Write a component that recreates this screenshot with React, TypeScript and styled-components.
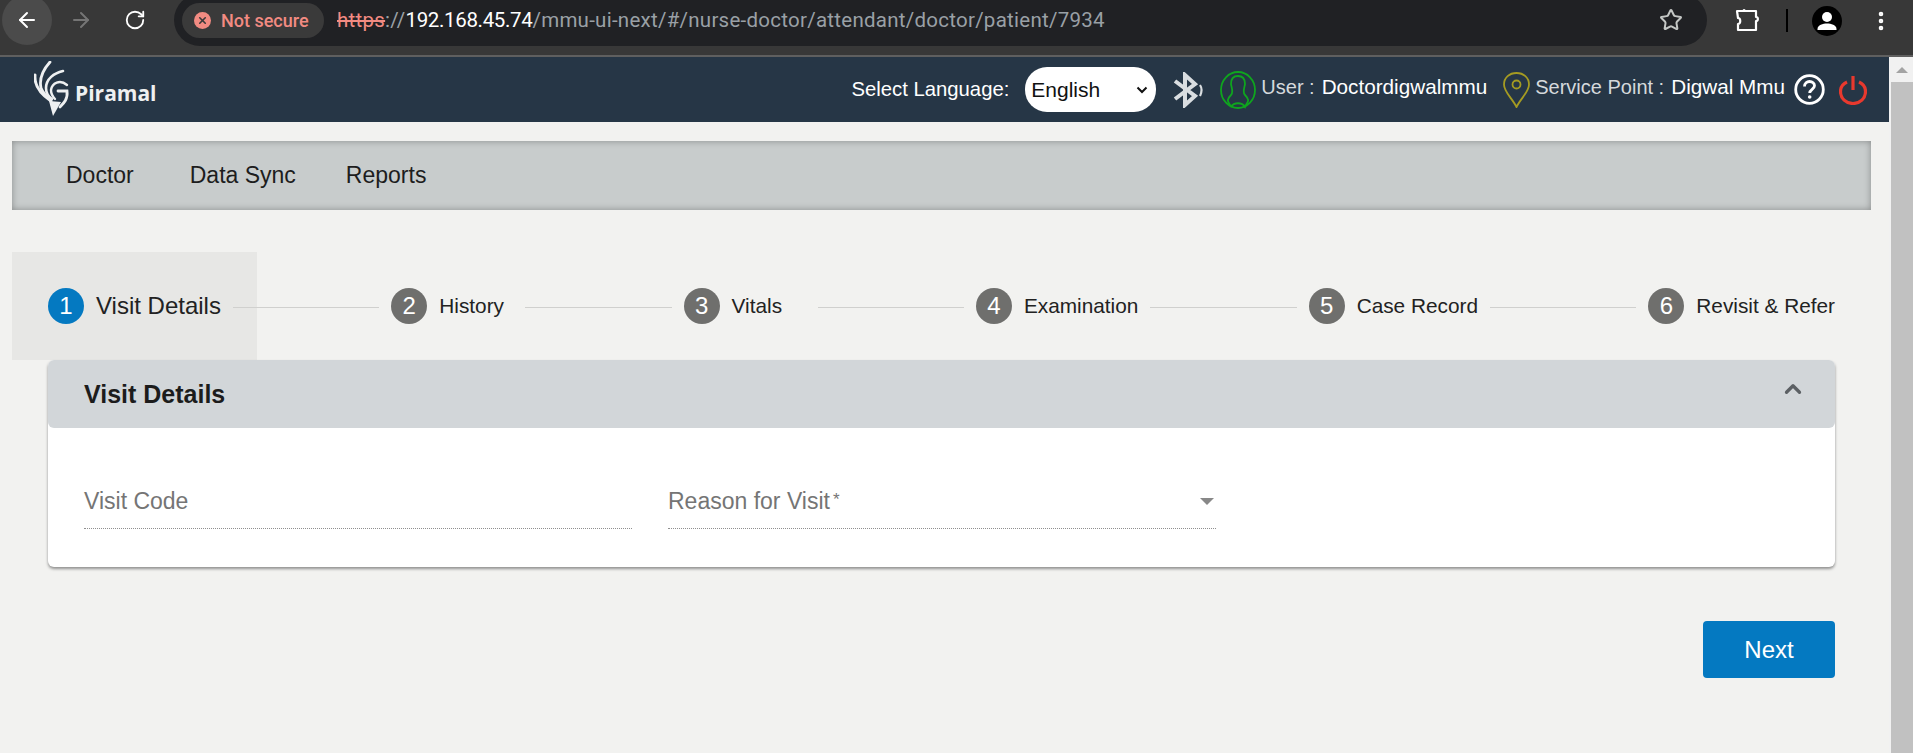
import React from "react";
import styled, { createGlobalStyle } from "styled-components";
import { ArrowLeft, ArrowRight, RotateCw, Star, EllipsisVertical, X, ChevronUp } from "lucide-react";

const Global = createGlobalStyle`
  html, body { margin: 0; padding: 0; height: 100%; overflow: hidden; background: #f2f2f0; }
  * { box-sizing: border-box; }
  body { font-family: "Liberation Sans", Arial, sans-serif; }
`;

const Page = styled.div`
  width: 1913px;
  height: 753px;
  display: flex;
  flex-direction: column;
  overflow: hidden;
`;

const Chrome = styled.div`
  height: 57px;
  flex: none;
  background: #383838;
  border-bottom: 2px solid #5f5f5f;
  display: flex;
  align-items: flex-start;
`;

const NavCluster = styled.div`
  display: flex;
  width: 174px;
  padding-left: 2px;
  flex: none;
`;

const ChromeBtn = styled.div<{ $active?: boolean; $width: number }>`
  width: ${(p) => p.$width}px;
  height: 50px;
  margin-top: -5px;
  border-radius: 25px;
  background: ${(p) => (p.$active ? "#4b4b4b" : "transparent")};
  display: flex;
  align-items: center;
  justify-content: center;
  color: #fff;
  flex: none;
`;

const AddressBar = styled.div`
  width: 1533px;
  height: 52px;
  margin-top: -6px;
  flex: none;
  background: #202124;
  border-radius: 26px;
  display: flex;
  align-items: center;
  padding: 0 24px 0 8px;
`;

const SecurityPill = styled.div`
  width: 142px;
  height: 35px;
  margin-top: 1px;
  border-radius: 18px;
  background: #3a3a3a;
  color: #f28b82;
  display: flex;
  align-items: center;
  gap: 10px;
  padding-left: 12px;
  font: 500 18px "Roboto", sans-serif;
  flex: none;
`;

const ErrorDot = styled.span`
  width: 17px;
  height: 17px;
  border-radius: 50%;
  background: #f28b82;
  color: #3a3a3a;
  display: flex;
  align-items: center;
  justify-content: center;
`;

const Url = styled.div`
  margin-left: 13px;
  font: 400 20.5px/1 "Roboto", sans-serif;
  letter-spacing: 0.26px;
  color: #9aa0a6;
  flex: 1;
  white-space: nowrap;
`;

const Strike = styled.span`
  color: #f28b82;
  text-decoration: line-through;
`;

const Host = styled.span`
  color: #fff;
  letter-spacing: -0.35px;
`;

const StarSlot = styled.div`
  display: flex;
  color: #c4c7c5;
`;

const ChromeRight = styled.div`
  display: flex;
  align-items: center;
  height: 41px;
  flex: 1;
  color: #fff;
`;

const PuzzleSlot = styled.div`
  margin-left: 28px;
  display: flex;
`;

const Divider = styled.div`
  width: 2px;
  height: 23px;
  background: #000;
  margin-left: 26px;
`;

const Avatar = styled.div`
  width: 30px;
  height: 30px;
  border-radius: 50%;
  background: #000;
  margin-left: 24px;
  overflow: hidden;
  flex: none;
`;

const DotsSlot = styled.div`
  margin-left: 27px;
  display: flex;
`;

const Body = styled.div`
  flex: 1;
  display: flex;
  min-height: 0;
`;

const Main = styled.div`
  width: 1889px;
  flex: none;
  background: #f2f2f0;
  display: flex;
  flex-direction: column;
`;

const ScrollTrack = styled.div`
  width: 24px;
  flex: none;
  background: #f1f1f1;
  display: flex;
  flex-direction: column;
  align-items: stretch;
  padding-left: 2px;
`;

const ScrollArrow = styled.div`
  height: 25px;
  display: flex;
  align-items: center;
  justify-content: center;
  &::before {
    content: "";
    border-left: 6px solid transparent;
    border-right: 6px solid transparent;
    border-bottom: 6px solid #a3a3a3;
  }
`;

const ScrollThumb = styled.div`
  flex: 1;
  background: #c1c1c1;
`;

const Header = styled.header`
  height: 65px;
  flex: none;
  background: #263646;
  display: flex;
  align-items: center;
  padding: 0 22px 0 34px;
  color: #fff;
`;

const Logo = styled.div`
  display: flex;
  align-items: flex-end;
  margin-bottom: 1px;
`;

const LogoText = styled.span`
  font: 700 21px/1 "Open Sans", sans-serif;
  color: #eef0f1;
  margin-left: 5px;
  margin-bottom: 13px;
`;

const HeaderRight = styled.div`
  margin-left: auto;
  display: flex;
  align-items: center;
`;

const LangLabel = styled.span`
  font: 400 20.3px "Liberation Sans", sans-serif;
  margin-right: 16px;
`;

const LangSelect = styled.select`
  appearance: none;
  width: 131px;
  height: 45px;
  border-radius: 22px;
  border: none;
  color: #111;
  font: 400 21px "Liberation Sans", sans-serif;
  padding: 0 24px 0 6px;
  margin-right: 16px;
  background: #fff url("data:image/svg+xml,%3Csvg xmlns='http://www.w3.org/2000/svg' width='12' height='8' viewBox='0 0 12 8'%3E%3Cpath d='M1.5 1.5 L6 6 L10.5 1.5' fill='none' stroke='%23111' stroke-width='2'/%3E%3C/svg%3E") no-repeat right 8px center;
`;

const UserText = styled.span<{ $gap: number }>`
  font: 400 20px "Liberation Sans", sans-serif;
  color: #d5d9dc;
  margin: -6px ${(p) => p.$gap}px 0 5px;
  white-space: nowrap;
`;

const UserValue = styled.b`
  font-weight: 400;
  font-size: 20.7px;
  color: #fff;
  margin-left: 7px;
`;

const IconSlot = styled.div<{ $ml?: number }>`
  display: flex;
  margin-left: ${(p) => p.$ml ?? 0}px;
`;

const TopNav = styled.nav`
  margin: 19px 18px 0 12px;
  height: 69px;
  flex: none;
  background: #c8cccc;
  box-shadow: inset 0 0 7px rgba(0, 0, 0, 0.32);
  display: flex;
  align-items: center;
  padding-left: 54px;
  gap: 50px;
`;

const TopNavItem = styled.a`
  font: 400 23px "Liberation Sans", sans-serif;
  color: #1d1d1d;
  &:first-child {
    margin-right: 6px;
  }
`;

const Stepper = styled.div`
  margin: 42px 18px 0 12px;
  height: 108px;
  flex: none;
  display: flex;
  align-items: stretch;
`;

const Step = styled.div<{ $selected?: boolean }>`
  display: flex;
  align-items: center;
  padding: 0 36px;
  gap: 12px;
  flex: none;
  background: ${(p) => (p.$selected ? "#e7e7e5" : "transparent")};
`;

const StepNum = styled.span<{ $selected?: boolean }>`
  width: 36px;
  height: 36px;
  border-radius: 50%;
  background: ${(p) => (p.$selected ? "#0479c1" : "#6f6f6d")};
  color: #fff;
  display: flex;
  align-items: center;
  justify-content: center;
  font: 400 24px "Liberation Sans", sans-serif;
`;

const StepLabel = styled.span<{ $selected?: boolean }>`
  font: 400 ${(p) => (p.$selected ? "24px" : "20.8px")} "Liberation Sans", sans-serif;
  color: #222;
  white-space: nowrap;
  min-width: 74px;
`;

const StepLine = styled.div`
  flex: 1;
  min-width: 0;
  height: 1px;
  background: #d0d0ce;
  align-self: center;
  margin: 3px -24px 0;
  position: relative;
`;

const Card = styled.section`
  margin: 0 54px 0 48px;
  height: 207px;
  flex: none;
  background: #fff;
  border-radius: 6px;
  box-shadow: 0 2px 3px rgba(0, 0, 0, 0.4);
`;

const CardHeader = styled.div`
  height: 68px;
  background: #d2d6d9;
  border-radius: 6px;
  display: flex;
  align-items: center;
  justify-content: space-between;
  padding: 0 29px 0 36px;
  color: #5c6064;
  svg {
    margin-bottom: 11px;
  }
`;

const CardTitle = styled.h2`
  margin: 0;
  font: 700 25px "Liberation Sans", sans-serif;
  color: #1c1c1c;
`;

const Fields = styled.div`
  display: flex;
  gap: 36px;
  padding: 35px 36px 0;
`;

const Field = styled.div`
  width: 548px;
  height: 66px;
  border-bottom: 1px dotted #8f8f8f;
  display: flex;
  align-items: center;
  justify-content: space-between;
  font: 400 23px "Liberation Sans", sans-serif;
  color: #757575;
  padding-top: 12px;
`;

const Req = styled.span`
  font-size: 17px;
  vertical-align: 4px;
  margin-left: 3px;
`;

const Caret = styled.span`
  width: 0;
  height: 0;
  margin-right: 2px;
  border-left: 7px solid transparent;
  border-right: 7px solid transparent;
  border-top: 7px solid #888;
`;

const Actions = styled.div`
  margin: 54px 54px 0 0;
  display: flex;
  justify-content: flex-end;
`;

const NextButton = styled.button`
  width: 132px;
  height: 57px;
  border: none;
  border-radius: 4px;
  background: #0479c1;
  color: #fff;
  font: 400 24px "Liberation Sans", sans-serif;
`;

const PiramalMark = () => (
  <svg width="36" height="56" viewBox="0 0 36 56" fill="none">
    <g stroke="#eef0f1" strokeLinecap="round" fill="none">
      <path d="M1 14 C0 26 8 34 17 40" strokeWidth="3" />
      <path d="M16 1 C8 10 5 18 7 27 C9 32 12 35 16 38" strokeWidth="2.8" />
      <path d="M29 10 C20 12 12 18 12 27 C12 32 15 36 18 38" strokeWidth="2.6" />
      <path d="M33 24 C26 18 18 22 17 29 C17 33 19 36 21 38" strokeWidth="2.4" />
      <path d="M24 30 L33 30 C34 38 30 42 26 46" strokeWidth="2.8" />
    </g>
    <path d="M15 40 L27 41 L19 55 Z" fill="#eef0f1" />
  </svg>
);

const BluetoothIcon = () => (
  <svg width="31" height="36" viewBox="0 0 31 36" fill="none" stroke="#d9dde0">
    <path d="M3 9 L23 24 L13 33 V3 L23 12 L3 27" strokeWidth="4" />
    <path d="M28 13 C30 16 30 20 28 24" strokeWidth="2.2" />
  </svg>
);

const UserIcon = () => (
  <svg width="36" height="38" viewBox="0 0 36 38" fill="none" stroke="#0fa51e" strokeWidth="1.8">
    <ellipse cx="18" cy="19" rx="17" ry="18" />
    <path d="M11 36 C9 31 5 30 11 24 C14 21 11 15 11 13 C11 7 14 5 18 5 C22 5 25 7 25 13 C25 15 22 21 25 24 C31 30 27 31 25 36 C22 31 14 31 11 36" />
  </svg>
);

const PinIcon = () => (
  <svg width="27" height="36" viewBox="0 0 27 36" fill="none" stroke="#a59b22" strokeWidth="1.8">
    <path d="M13.5 35 C9 26 1 20 1 12.5 C1 5.5 6.5 1 13.5 1 C20.5 1 26 5.5 26 12.5 C26 20 18 26 13.5 35 Z" />
    <circle cx="13.5" cy="12.5" r="4" />
  </svg>
);

const HelpIcon = () => (
  <svg width="31" height="31" viewBox="0 0 31 31" fill="none" stroke="#fff">
    <circle cx="15.5" cy="15.5" r="13.8" strokeWidth="2.8" />
    <path d="M10.5 12.5 C10.5 9 13 7.5 15.5 7.5 C18.5 7.5 20.5 9.3 20.5 11.8 C20.5 15.2 15.7 15.5 15.7 19" strokeWidth="2.8" />
    <circle cx="15.7" cy="23" r="1.8" fill="#fff" stroke="none" />
  </svg>
);

const PowerIcon = () => (
  <svg width="28" height="30" viewBox="0 0 28 30" fill="none" stroke="#e8392e" strokeWidth="3.2">
    <path d="M8 7 C3.5 9 1.5 12.5 1.5 16.5 C1.5 23.5 7 28.5 14 28.5 C21 28.5 26.5 23.5 26.5 16.5 C26.5 12.5 24.5 9 20 7" />
    <path d="M14 1 V15" />
  </svg>
);

const ProfileGlyph = () => (
  <svg width="30" height="30" viewBox="0 0 30 30" fill="#fff">
    <circle cx="15" cy="11" r="5" />
    <path d="M5.5 23 C5.5 19 11 17.5 15 17.5 C19 17.5 24.5 19 24.5 23 V24 H5.5 Z" />
  </svg>
);

const ExtensionIcon = () => (
  <svg width="25" height="23" viewBox="0 0 25 23" fill="none" stroke="#fff" strokeWidth="2.2" strokeLinejoin="round">
    <path d="M2 2 H8.5 C8.5 0.8 9.5 1 10 2 H21 V8 C23.5 8 23.5 12 21 12 V21 H3 V15 C6 15 6 9 3 9 Z" />
  </svg>
);

const steps = ["Visit Details", "History", "Vitals", "Examination", "Case Record", "Revisit & Refer"];

export default function App() {
  return (
    <Page>
      <Global />
      <Chrome>
        <NavCluster>
          <ChromeBtn $active $width={50}><ArrowLeft size={24} strokeWidth={2} /></ChromeBtn>
          <ChromeBtn $width={58}><ArrowRight size={24} strokeWidth={2} color="#757575" /></ChromeBtn>
          <ChromeBtn $width={50}><RotateCw size={22} strokeWidth={2} /></ChromeBtn>
        </NavCluster>
        <AddressBar>
          <SecurityPill>
            <ErrorDot><X size={11} strokeWidth={3.5} /></ErrorDot>
            Not secure
          </SecurityPill>
          <Url>
            <Strike>https</Strike>://<Host>192.168.45.74</Host>/mmu-ui-next/#/nurse-doctor/attendant/doctor/patient/7934
          </Url>
          <StarSlot><Star size={24} strokeWidth={2} /></StarSlot>
        </AddressBar>
        <ChromeRight>
          <PuzzleSlot><ExtensionIcon /></PuzzleSlot>
          <Divider />
          <Avatar><ProfileGlyph /></Avatar>
          <DotsSlot><EllipsisVertical size={24} strokeWidth={2.6} /></DotsSlot>
        </ChromeRight>
      </Chrome>
      <Body>
        <Main>
          <Header>
            <Logo>
              <PiramalMark />
              <LogoText>Piramal</LogoText>
            </Logo>
            <HeaderRight>
              <LangLabel>Select Language:</LangLabel>
              <LangSelect defaultValue="English">
                <option>English</option>
              </LangSelect>
              <BluetoothIcon />
              <IconSlot $ml={17}><UserIcon /></IconSlot>
              <UserText $gap={16}>User :<UserValue>Doctordigwalmmu</UserValue></UserText>
              <PinIcon />
              <UserText $gap={9}>Service Point :<UserValue>Digwal Mmu</UserValue></UserText>
              <HelpIcon />
              <IconSlot $ml={14}><PowerIcon /></IconSlot>
            </HeaderRight>
          </Header>
          <TopNav>
            <TopNavItem>Doctor</TopNavItem>
            <TopNavItem>Data Sync</TopNavItem>
            <TopNavItem>Reports</TopNavItem>
          </TopNav>
          <Stepper>
            {steps.map((s, i) => (
              <React.Fragment key={s}>
                <Step $selected={i === 0}>
                  <StepNum $selected={i === 0}>{i + 1}</StepNum>
                  <StepLabel $selected={i === 0}>{s}</StepLabel>
                </Step>
                {i < steps.length - 1 && <StepLine />}
              </React.Fragment>
            ))}
          </Stepper>
          <Card>
            <CardHeader>
              <CardTitle>Visit Details</CardTitle>
              <ChevronUp size={26} strokeWidth={3} />
            </CardHeader>
            <Fields>
              <Field>Visit Code</Field>
              <Field>
                <span>Reason for Visit<Req>*</Req></span>
                <Caret />
              </Field>
            </Fields>
          </Card>
          <Actions>
            <NextButton>Next</NextButton>
          </Actions>
        </Main>
        <ScrollTrack>
          <ScrollArrow />
          <ScrollThumb />
        </ScrollTrack>
      </Body>
    </Page>
  );
}
